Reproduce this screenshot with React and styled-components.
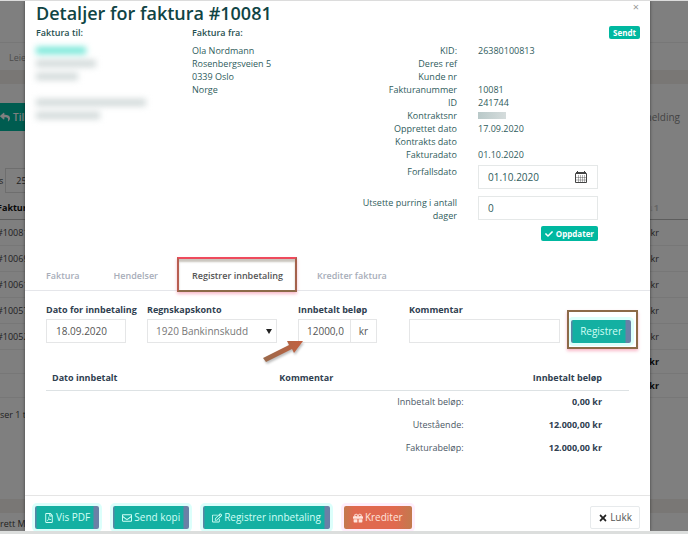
import React, { useState } from "react";
import styled, { createGlobalStyle } from "styled-components";
import {
  FaCheck,
  FaRegFilePdf,
  FaRegEnvelope,
  FaRegEdit,
  FaGift,
  FaTimes,
  FaReply,
} from "react-icons/fa";

const invoiceRows = ["#10081", "#10069", "#10061", "#10057", "#10052"];

const details = [
  ["KID:", "26380100813"],
  ["Deres ref", ""],
  ["Kunde nr", ""],
  ["Fakturanummer", "10081"],
  ["ID", "241744"],
  ["Kontraktsnr", "hidden"],
  ["Opprettet dato", "17.09.2020"],
  ["Kontrakts dato", ""],
  ["Fakturadato", "01.10.2020"],
];

const tabs = ["Faktura", "Hendelser", "Registrer innbetaling", "Krediter faktura"];

const totals = [
  ["Innbetalt beløp:", "0,00 kr"],
  ["Utestående:", "12.000,00 kr"],
  ["Fakturabeløp:", "12.000,00 kr"],
];

const CalendarIcon = () => (
  <svg width="12" height="12" viewBox="0 0 12 12" fill="none" stroke="#444">
    <path d="M0.5 2.5h11v9h-11z" />
    <path d="M1 1.5h10M2.5 0v3M9.5 0v3" />
    <path d="M3.5 4v7M5.5 4v7M7.5 4v7M9.5 4v7M1 6.5h10M1 9h10" strokeWidth="0.4" />
  </svg>
);

const InvoiceList = () => (
  <List aria-hidden="true">
    <ListNav>Leietakere</ListNav>
    <Band />
    <ListToolbar>
      <ListButton>
        <FaReply /> Tilbake
      </ListButton>
      <span>Betalingsmelding</span>
    </ListToolbar>
    <PageSize>
      s <PageSizeBox>25</PageSizeBox>
    </PageSize>
    <ListTable>
      <thead>
        <tr>
          <th>Faktura</th>
          <SortCell>↓1</SortCell>
        </tr>
      </thead>
      <tbody>
        {invoiceRows.map((nr) => (
          <tr key={nr}>
            <td>{nr}</td>
            <td>kr</td>
          </tr>
        ))}
      </tbody>
      <tfoot>
        <tr>
          <td />
          <td>kr</td>
        </tr>
        <tr>
          <td />
          <td>kr</td>
        </tr>
      </tfoot>
    </ListTable>
    <ListInfo>ser 1 til 5</ListInfo>
    <Band />
    <Copyright>rett Multi</Copyright>
  </List>
);

const Invoice = () => (
  <Summary>
    <Party>
      <h2>Faktura til:</h2>
      <Redacted>
        <Smudge $width={50} $teal />
        <Smudge $width={60} />
        <Smudge $width={42} />
        <Smudge $width={0} />
        <Smudge $width={110} />
        <Smudge $width={64} />
      </Redacted>
    </Party>
    <Party $grow>
      <h2>Faktura fra:</h2>
      <address>
        Ola Nordmann
        <br />
        Rosenbergsveien 5
        <br />
        0339 Oslo
        <br />
        Norge
      </address>
    </Party>
    <Side>
      <Status>Sendt</Status>
      <Details>
        {details.map(([name, value]) => (
          <React.Fragment key={name}>
            <dt>{name}</dt>
            <dd>{value === "hidden" ? <Masked /> : value}</dd>
          </React.Fragment>
        ))}
      </Details>
      <DueForm>
        <label htmlFor="due">Forfallsdato</label>
        <InputBox>
          <input id="due" defaultValue="01.10.2020" />
          <button type="button" aria-label="Velg dato">
            <CalendarIcon />
          </button>
        </InputBox>
        <label htmlFor="delay">Utsette purring i antall dager</label>
        <InputBox>
          <input id="delay" defaultValue="0" />
        </InputBox>
      </DueForm>
      <UpdateButton type="button">
        <FaCheck /> Oppdater
      </UpdateButton>
    </Side>
  </Summary>
);

const PaymentForm = () => (
  <Form onSubmit={(e) => e.preventDefault()}>
    <Field>
      <label htmlFor="date">Dato for innbetaling</label>
      <DateInput id="date" defaultValue="18.09.2020" />
    </Field>
    <Field>
      <label htmlFor="account">Regnskapskonto</label>
      <SelectWrap>
        <select id="account">
          <option>1920 Bankinnskudd</option>
        </select>
      </SelectWrap>
    </Field>
    <Field>
      <label htmlFor="amount">Innbetalt beløp</label>
      <AmountGroup>
        <AmountInput id="amount" defaultValue="12000,00" />
        <Unit>kr</Unit>
        <Arrow width="46" height="28" viewBox="0 0 46 28">
          <path
            d="M2 21 L28 8 L26 4 L42 4 L33 16 L31 12 L5 25 Z"
            fill="url(#arrowFill)"
          />
          <defs>
            <linearGradient id="arrowFill">
              <stop offset="0" stopColor="#9a6a4c" />
              <stop offset="1" stopColor="#c4603f" />
            </linearGradient>
          </defs>
        </Arrow>
      </AmountGroup>
    </Field>
    <Field>
      <label htmlFor="comment">Kommentar</label>
      <CommentInput id="comment" />
    </Field>
    <Marked>
      <Button type="submit">Registrer</Button>
    </Marked>
  </Form>
);

const App = () => {
  const [active, setActive] = useState("Registrer innbetaling");

  return (
    <Page>
      <GlobalStyle />
      <InvoiceList />
      <Backdrop>
        <Modal role="dialog" aria-labelledby="title">
          <Header>
            <h1 id="title">Detaljer for faktura #10081</h1>
            <CloseButton type="button" aria-label="Lukk vindu">
              ×
            </CloseButton>
          </Header>
          <Invoice />
          <Tabs role="tablist">
            {tabs.map((tab) => (
              <Tab
                key={tab}
                type="button"
                role="tab"
                aria-selected={active === tab}
                $active={active === tab}
                onClick={() => setActive(tab)}
              >
                {tab}
              </Tab>
            ))}
          </Tabs>
          <PaymentForm />
          <Payments>
            <thead>
              <tr>
                <th>Dato innbetalt</th>
                <th>Kommentar</th>
                <th>Innbetalt beløp</th>
              </tr>
            </thead>
            <tbody>
              {totals.map(([name, value]) => (
                <tr key={name}>
                  <td colSpan={2}>{name}</td>
                  <td>
                    <strong>{value}</strong>
                  </td>
                </tr>
              ))}
            </tbody>
          </Payments>
          <Footer>
            <Button type="button">
              <FaRegFilePdf /> Vis PDF
            </Button>
            <Button type="button">
              <FaRegEnvelope /> Send kopi
            </Button>
            <Button type="button">
              <FaRegEdit /> Registrer innbetaling
            </Button>
            <Button type="button" $danger>
              <FaGift /> Krediter
            </Button>
            <DismissButton type="button">
              <FaTimes /> Lukk
            </DismissButton>
          </Footer>
        </Modal>
      </Backdrop>
    </Page>
  );
};

export default App;

const GlobalStyle = createGlobalStyle`
  * {
    box-sizing: border-box;
  }
  body {
    margin: 0;
    font-family: "Open Sans", sans-serif;
    font-size: 9px;
    line-height: 13px;
    color: #2f5c5c;
  }
  h1, h2, dl, dd, address {
    margin: 0;
    font-style: normal;
  }
  input, select, button {
    font: inherit;
    color: inherit;
  }
  button {
    cursor: pointer;
  }
`;

const Page = styled.div`
  position: relative;
  min-height: 100vh;
  overflow: hidden;
  border-top: 1px solid #dcdcdc;
  border-bottom: 3px solid #dcdedd;
`;

/* invoice list behind the dialog */
const List = styled.div`
  background-color: #fff;
  color: #444;
`;
const ListNav = styled.div`
  margin-top: 41px;
  padding: 8px 9px;
  border-top: 1px solid #eee;
  color: #999;
  height: 28px;
`;
const Band = styled.div`
  height: 14px;
  background-color: #f3eeea;
`;
const ListToolbar = styled.div`
  display: flex;
  justify-content: space-between;
  align-items: center;
  height: 66px;
  padding-right: 8px;
  color: #888;
  font-size: 10px;
`;
const ListButton = styled.div`
  display: flex;
  align-items: center;
  gap: 3px;
  height: 28px;
  background-color: #00b8a0;
  color: #fff;
  font-weight: 600;
`;
const PageSize = styled.div`
  display: flex;
  align-items: center;
  gap: 2px;
  margin: 18px 0 4px -1px;
`;
const PageSizeBox = styled.span`
  padding: 5px 10px;
  border: 1px solid #ddd;
`;
const ListTable = styled.table`
  width: calc(100% + 3px);
  margin-left: -3px;
  border-collapse: collapse;

  & tr {
    height: 26px;
  }
  & th,
  & td {
    padding: 0;
    text-align: left;
    border-bottom: 1px solid #eee;
  }
  & thead tr {
    height: 22px;
  }
  & th {
    color: #111;
    border-color: #bbb;
  }
  & th:last-child,
  & td:last-child {
    text-align: right;
    padding-right: 29px;
  }
  & tfoot tr {
    height: 24px;
    font-weight: 700;
    color: #111;
  }
`;
const SortCell = styled.th`
  && {
    color: #ccc;
  }
`;
const ListInfo = styled.div`
  height: 101px;
  padding-top: 10px;
`;
const Copyright = styled.div`
  padding-top: 4px;
`;

const Backdrop = styled.div`
  position: absolute;
  inset: 0;
  padding: 0 38px 0 25px;
  background-color: rgba(0, 0, 0, 0.5);
`;
const Modal = styled.section`
  min-height: 100%;
  background-color: #fff;
  box-shadow: 0 0 3px rgba(0, 0, 0, 0.5);
`;
const Header = styled.header`
  display: flex;
  justify-content: space-between;
  align-items: flex-start;
  padding: 0 11px;

  & h1 {
    font-size: 18px;
    line-height: 24px;
    font-weight: 600;
    color: #104444;
  }
`;
const CloseButton = styled.button`
  border: none;
  padding: 0;
  background: none;
  color: #999;
  font-size: 11px;
  line-height: 12px;
`;

const Summary = styled.div`
  display: flex;
  padding: 0 10px 0 11px;
`;
const Party = styled.div`
  flex: ${(props) => (props.$grow ? "1" : "0 0 156px")};

  & h2 {
    font-size: 9px;
    line-height: 16px;
    font-weight: 600;
    margin-bottom: 3px;
    color: #1f5050;
  }
`;
const Redacted = styled.div`
  padding-top: 3px;
  filter: blur(3px);
`;
const Smudge = styled.div`
  width: ${(props) => props.$width}px;
  height: 7px;
  margin-bottom: 6px;
  background-color: ${(props) => (props.$teal ? "#6fe6d6" : "#d0d8d8")};
`;
const Side = styled.div`
  display: flex;
  flex-direction: column;
  align-items: flex-end;
  padding-top: 1px;
`;
const Status = styled.span`
  padding: 0 4px;
  border-radius: 2px;
  background-color: #00b8a0;
  color: #fff;
  font-size: 8px;
  font-weight: 700;
`;
const Details = styled.dl`
  display: grid;
  grid-template-columns: 100px 120px;
  grid-auto-rows: 13px;
  column-gap: 21px;
  margin: 5px 42px 4px 0;

  & dt {
    text-align: right;
  }
`;
const Masked = styled.span`
  display: block;
  width: 28px;
  height: 7px;
  margin-top: 3px;
  background: linear-gradient(to right, #b9c9c9, #d5dcdc);
`;
const DueForm = styled.div`
  display: grid;
  grid-template-columns: 100px 120px;
  gap: 7px 21px;
  margin-right: 42px;

  & label {
    text-align: right;
  }
`;
const InputBox = styled.div`
  display: flex;
  align-items: center;
  height: 24px;
  padding: 0 10px 0 9px;
  border: 1px solid #e5e8e8;

  & input {
    flex: 1;
    min-width: 0;
    padding: 0;
    border: none;
    font-size: 10px;
  }
  & button {
    display: flex;
    border: none;
    padding: 0;
    background: none;
  }
`;
const UpdateButton = styled.button`
  display: flex;
  align-items: center;
  gap: 3px;
  height: 15px;
  margin: 4px 42px 0 0;
  padding: 0 4px;
  border: none;
  border-radius: 2px;
  background-color: #00b8a0;
  color: #fff;
  font-size: 8px;
  font-weight: 700;
`;

const Tabs = styled.div`
  display: flex;
  margin-top: 19px;
  padding-left: 4px;
  border-bottom: 1px solid #e5e6ea;
`;
const Tab = styled.button`
  position: relative;
  height: 30px;
  padding: 0 17px;
  border: none;
  background: none;
  font-weight: 600;
  color: ${(props) => (props.$active ? "#555" : "#a7adb9")};

  &::after {
    content: "";
    display: ${(props) => (props.$active ? "block" : "none")};
    position: absolute;
    inset: -3px 3px -2px 2px;
    border: 2px solid;
    border-color: #ee4a5c #a4624c #8c6a48 #b85e50;
    box-shadow: 0 2px 3px rgba(240, 80, 120, 0.4),
      inset 0 3px 2px rgba(120, 110, 90, 0.4);
  }
`;

const Form = styled.form`
  display: grid;
  grid-template-columns: 101px 151px 111px 1fr auto;
  align-items: end;
  padding: 12px 19px 0 21px;
  color: #555;
`;
const Field = styled.div`
  & label {
    display: block;
    margin-bottom: 3px;
    font-weight: 700;
    color: #2f4050;
    white-space: nowrap;
  }
`;
const TextInput = styled.input`
  display: block;
  height: 24px;
  padding: 0 9px;
  border: 1px solid #e5e6e7;
  background-color: #fff;
  font-size: 10px;
`;
const DateInput = styled(TextInput)`
  width: 80px;
`;
const AmountInput = styled(TextInput)`
  width: 53px;
  padding: 0 6px 0 8px;
`;
const CommentInput = styled(TextInput)`
  width: calc(100% - 11px);
`;
const SelectWrap = styled.div`
  position: relative;
  width: 130px;

  & select {
    appearance: none;
    width: 100%;
    height: 24px;
    padding: 0 8px;
    border: 1px solid #e5e6e7;
    border-radius: 0;
    background-color: #fff;
    font-size: 10px;
    color: #777;
  }
  &::after {
    content: "";
    position: absolute;
    right: 5px;
    top: 10px;
    border: 3px solid transparent;
    border-top: 5px solid #222;
    border-bottom: none;
  }
`;
const AmountGroup = styled.div`
  position: relative;
  display: flex;
`;
const Unit = styled.span`
  display: grid;
  place-items: center;
  width: 26px;
  border: 1px solid #e5e6e7;
  border-left: none;
  font-size: 10px;
`;
const Arrow = styled.svg`
  position: absolute;
  left: -37px;
  top: 18px;
  filter: drop-shadow(1px 2px 1px rgba(0, 0, 0, 0.25));
`;
const Button = styled.button`
  display: flex;
  align-items: center;
  gap: 2px;
  height: 23px;
  padding: 0 9px;
  border: none;
  border-radius: 2px;
  background: ${(props) =>
    props.$danger
      ? "linear-gradient(to right, #c27a4e, #e0694f 15%, #e0694f 75%, #c27a4e)"
      : "linear-gradient(to right, #5c84a6 1px, #14b0a2 2px calc(100% - 6px), #6a80a6 calc(100% - 5px))"};
  box-shadow: 0 0 0 3px ${(props) => (props.$danger ? "#ffeefc" : "#dcfffb")};
  color: ${(props) => (props.$danger ? "#ffe4dc" : "#d2fff6")};
  font-size: 10px;
  font-weight: 500;
  white-space: nowrap;
`;
const Marked = styled.div`
  position: relative;

  &::after {
    content: "";
    position: absolute;
    inset: -10px -7px -6px -4px;
    border: 2px solid #8c6a48;
    box-shadow: 0 2px 3px rgba(240, 80, 120, 0.4);
    pointer-events: none;
  }
`;

const Payments = styled.table`
  width: calc(100% - 42px);
  margin: 22px 21px 36px;
  border-collapse: collapse;
  table-layout: fixed;
  color: #4b5866;

  & tr {
    height: 23px;
  }
  & th {
    height: 25px;
    padding: 0 6px;
    text-align: left;
    color: #2f4050;
    border-bottom: 1px solid #dde2e4;
  }
  & th:nth-child(1) {
    width: 39%;
  }
  & th:nth-child(2) {
    width: 34%;
  }
  & td {
    padding: 0 8px;
    text-align: right;
  }
  & th:last-child,
  & td:last-child {
    text-align: right;
    padding-right: 27px;
    color: #2f4050;
  }
`;
const Footer = styled.footer`
  display: flex;
  gap: 14px;
  padding: 10px 10px 2px;
  border-top: 1px solid #e5e5e5;
`;
const DismissButton = styled(Button)`
  margin-left: auto;
  padding: 0 7px;
  border: 1px solid #e7eaec;
  background: #fff;
  box-shadow: none;
  color: #555;
  font-weight: 400;

  & svg {
    color: #222;
  }
`;
